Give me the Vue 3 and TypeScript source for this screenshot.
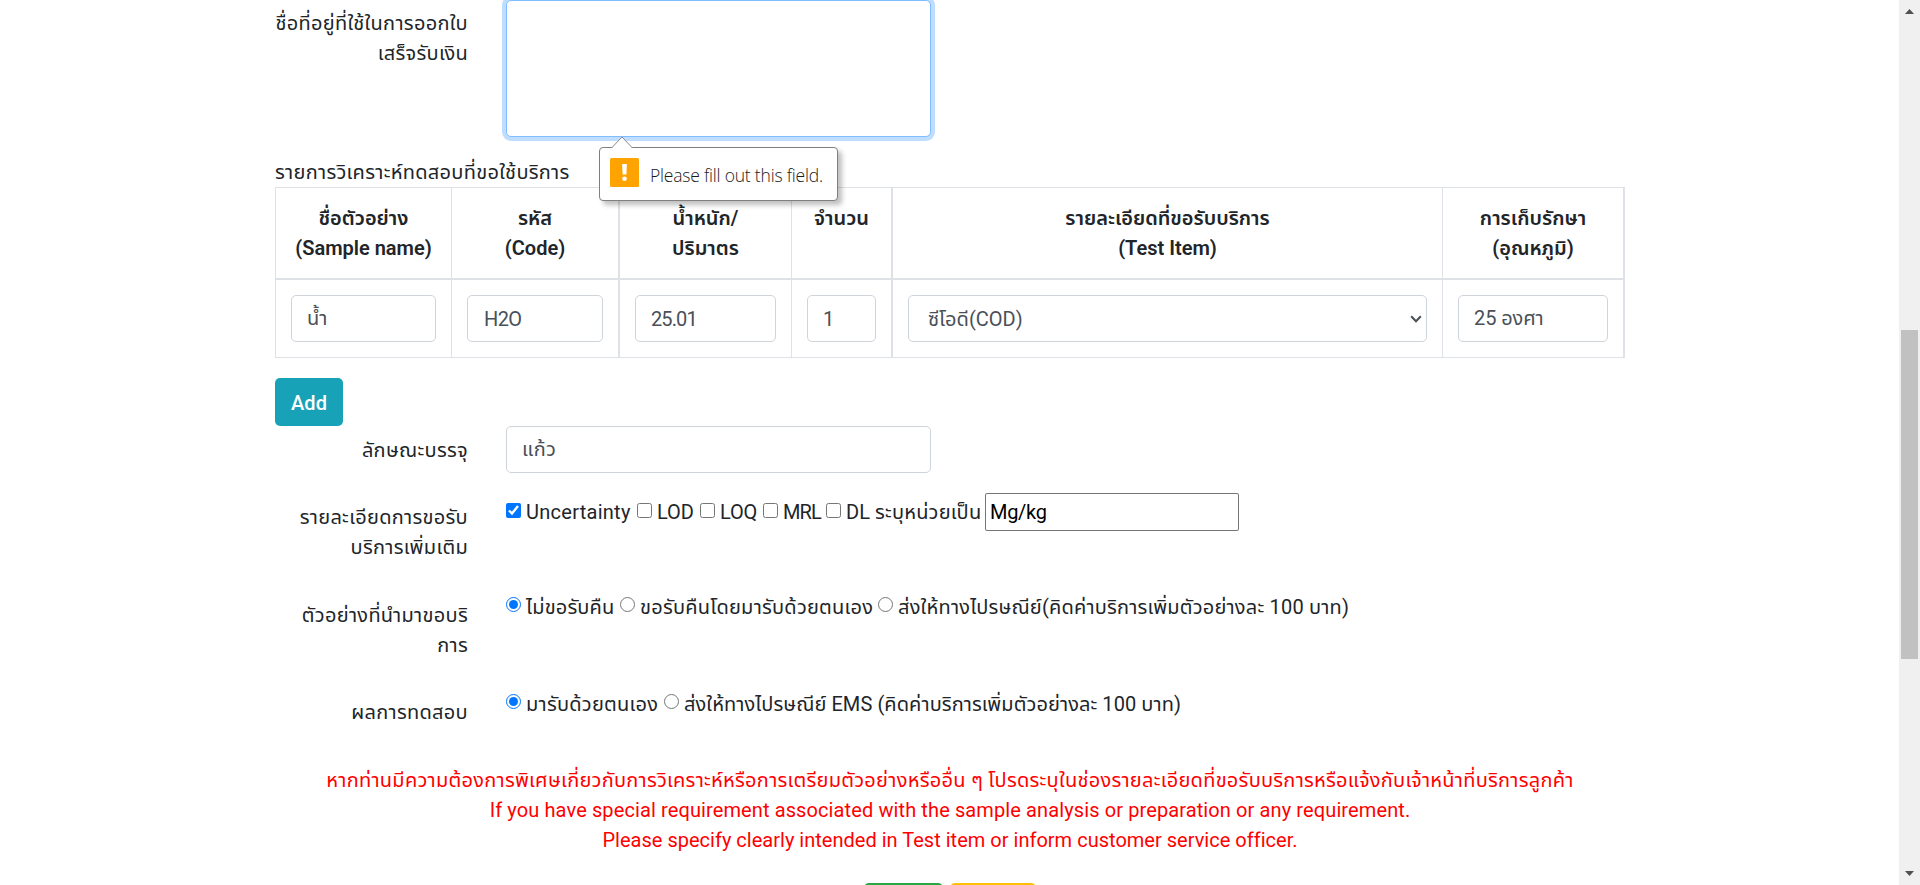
<script setup lang="ts">
import { ref } from 'vue'

interface Column { lines: string[]; width: number; thick?: boolean }
interface Option { label: string; width: number; spacing: number }

const columns: Column[] = [
  { lines: ['ชื่อตัวอย่าง', '(Sample name)'], width: 176 },
  { lines: ['รหัส', '(Code)'], width: 168, thick: true },
  { lines: ['น้ำหนัก/', 'ปริมาตร'], width: 172 },
  { lines: ['จำนวน'], width: 101, thick: true },
  { lines: ['รายละเอียดที่ขอรับบริการ', '(Test Item)'], width: 550 },
  { lines: ['การเก็บรักษา', '(อุณหภูมิ)'], width: 182, thick: true },
]
const extras: Option[] = [
  { label: 'Uncertainty', width: 131, spacing: 0.27 },
  { label: 'LOD', width: 63, spacing: -0.1 },
  { label: 'LOQ', width: 63, spacing: -0.2 },
  { label: 'MRL', width: 63, spacing: -0.9 },
  { label: 'DL', width: 49, spacing: 0 },
]
const returns: Option[] = [
  { label: 'ไม่ขอรับคืน', width: 114, spacing: 0.15 },
  { label: 'ขอรับคืนโดยมารับด้วยตนเอง', width: 258, spacing: 0.24 },
  { label: 'ส่งให้ทางไปรษณีย์(คิดค่าบริการเพิ่มตัวอย่างละ 100 บาท)', width: 480, spacing: 0.2 },
]
const results: Option[] = [
  { label: 'มารับด้วยตนเอง', width: 158, spacing: 0.25 },
  { label: 'ส่งให้ทางไปรษณีย์ EMS (คิดค่าบริการเพิ่มตัวอย่างละ 100 บาท)', width: 530, spacing: 0.08 },
]

const address = ref('')
const sample = ref({ name: 'น้ำ', code: 'H2O', weight: '25.01', amount: '1', item: 'ซีโอดี(COD)', storage: '25 องศา' })
const container = ref('แก้ว')
const checked = ref<string[]>(['Uncertainty'])
const unit = ref('Mg/kg')
const returnChoice = ref(returns[0].label)
const resultChoice = ref(results[0].label)
</script>

<template>
  <div class="page">
    <main class="content">
      <div class="row row-address">
        <label class="label">ชื่อที่อยู่ที่ใช้ในการออกใบ<br />เสร็จรับเงิน</label>
        <div class="address-field">
          <textarea v-model="address" class="control area"></textarea>
          <div class="bubble">
            <svg class="tip" width="22" height="12" viewBox="0 0 22 12">
              <path d="M0.5 12 L11 1 L21.5 12" fill="#fff" stroke="#8a8a8a" stroke-width="1" />
            </svg>
            <svg class="warn" width="29" height="29" viewBox="0 0 29 29">
              <rect width="29" height="29" rx="1.5" fill="#ffa300" />
              <path d="M12.1 6h4.8l-.5 10.5h-3.8z" fill="#fff" />
              <circle cx="14.5" cy="20.7" r="2.3" fill="#fff" />
            </svg>
            <span class="bubble-text">Please fill out this field.</span>
          </div>
        </div>
      </div>

      <div class="heading">รายการวิเคราะห์ทดสอบที่ขอใช้บริการ</div>

      <div class="table">
        <div class="tr head">
          <div v-for="(c, i) in columns" :key="i" class="cell" :class="{ thick: c.thick }" :style="{ width: c.width + 'px' }">
            <div v-for="l in c.lines" :key="l">{{ l }}</div>
          </div>
        </div>
        <div class="tr">
          <div class="cell" :style="{ width: columns[0].width + 'px' }"><input v-model="sample.name" class="control" /></div>
          <div class="cell thick" :style="{ width: columns[1].width + 'px' }"><input v-model="sample.code" class="control code" /></div>
          <div class="cell" :style="{ width: columns[2].width + 'px' }"><input v-model="sample.weight" class="control digits" /></div>
          <div class="cell thick" :style="{ width: columns[3].width + 'px' }"><input v-model="sample.amount" class="control digits" /></div>
          <div class="cell select-cell" :style="{ width: columns[4].width + 'px' }">
            <select v-model="sample.item" class="control select"><option>ซีโอดี(COD)</option></select>
            <svg class="chevron" width="12" height="8" viewBox="0 0 12 8">
              <path d="M1.2 1.2 L6 6.2 L10.8 1.2" fill="none" stroke="#495057" stroke-width="2" />
            </svg>
          </div>
          <div class="cell thick" :style="{ width: columns[5].width + 'px' }"><input v-model="sample.storage" class="control storage" /></div>
        </div>
      </div>

      <button class="add">Add</button>

      <div class="row row-container">
        <label class="label">ลักษณะบรรจุ</label>
        <input v-model="container" class="control wide" />
      </div>

      <div class="row row-extra">
        <label class="label">รายละเอียดการขอรับ<br />บริการเพิ่มเติม</label>
        <div class="options extra">
          <label v-for="o in extras" :key="o.label" class="option" :style="{ width: o.width + 'px', letterSpacing: o.spacing + 'px' }">
            <input v-model="checked" type="checkbox" :value="o.label" /><span>{{ o.label }}</span>
          </label>
          <span class="unit-label">ระบุหน่วยเป็น</span>
          <input v-model="unit" class="unit" />
        </div>
      </div>

      <div class="row row-return">
        <label class="label">ตัวอย่างที่นำมาขอบริ<br />การ</label>
        <div class="options">
          <label v-for="o in returns" :key="o.label" class="option" :style="{ width: o.width + 'px', letterSpacing: o.spacing + 'px' }">
            <input v-model="returnChoice" type="radio" name="return" :value="o.label" /><span>{{ o.label }}</span>
          </label>
        </div>
      </div>

      <div class="row row-result">
        <label class="label">ผลการทดสอบ</label>
        <div class="options">
          <label v-for="o in results" :key="o.label" class="option" :style="{ width: o.width + 'px', letterSpacing: o.spacing + 'px' }">
            <input v-model="resultChoice" type="radio" name="result" :value="o.label" /><span>{{ o.label }}</span>
          </label>
        </div>
      </div>

      <div class="notice">
        <div>หากท่านมีความต้องการพิเศษเกี่ยวกับการวิเคราะห์หรือการเตรียมตัวอย่างหรืออื่น ๆ โปรดระบุในช่องรายละเอียดที่ขอรับบริการหรือแจ้งกับเจ้าหน้าที่บริการลูกค้า</div>
        <div class="english">If you have special requirement associated with the sample analysis or preparation or any requirement.</div>
        <div class="english tight">Please specify clearly intended in Test item or inform customer service officer.</div>
      </div>

      <div class="actions">
        <button class="action save"></button>
        <button class="action reset"></button>
      </div>
    </main>

    <aside class="scrollbar">
      <svg class="arrow" width="9" height="5" viewBox="0 0 9 5"><path d="M0 5 L4.5 0 L9 5z" fill="#505050" /></svg>
      <div class="thumb"></div>
      <svg class="arrow down" width="9" height="5" viewBox="0 0 9 5"><path d="M0 0 L4.5 5 L9 0z" fill="#505050" /></svg>
    </aside>
  </div>
</template>

<style>
body { margin: 0; overflow: hidden; background: #fff; }
</style>

<style scoped>
.page {
  display: flex;
  justify-content: space-between;
  width: 1920px;
  height: 885px;
  overflow: hidden;
  font-family: Roboto, "Noto Sans Thai", "Noto Sans", sans-serif;
  font-size: 20px;
  line-height: 30px;
  letter-spacing: 0.3px;
  color: #212529;
}
.page *, .page *::before { box-sizing: border-box; }
.content { width: 1350px; margin-left: 275px; }
.row { display: flex; align-items: flex-start; gap: 38px; }
.label { width: 193px; padding-top: 9px; text-align: right; white-space: nowrap; flex: none; }
.row-address { height: 157px; }
.row-address .label { padding-top: 8px; }
.address-field { position: relative; width: 425px; }
.control {
  display: block;
  width: 100%;
  height: 47px;
  margin: 0;
  padding: 7px 15px;
  border: 1px solid #ced4da;
  border-radius: 5px;
  background: #fff;
  color: #495057;
  font: inherit;
  letter-spacing: inherit;
  outline: none;
}
.control.code { padding-left: 16px; letter-spacing: -0.6px; }
.control.digits { letter-spacing: -0.9px; }
.control.storage { letter-spacing: -0.1px; }
.control.select { padding-left: 19px; letter-spacing: 0; appearance: none; }
.select-cell { position: relative; }
.chevron { position: absolute; right: 20px; top: 35px; }
.control.area {
  height: 137px;
  resize: none;
  border-color: #80bdff;
  box-shadow: 0 0 0 4px #bfdeff;
}
.control.wide { width: 425px; }
.bubble {
  position: absolute;
  z-index: 2;
  top: 147px;
  left: 93px;
  display: flex;
  align-items: center;
  width: 239px;
  height: 54px;
  padding: 0 10px;
  gap: 11px;
  border: 1px solid #808080;
  border-radius: 4px;
  background: #fff;
  box-shadow: 4px 4px 5px rgba(0, 0, 0, 0.25);
}
.tip { position: absolute; top: -12px; left: 11px; }
.warn { margin-top: -3px; flex: none; }
.bubble-text {
  padding-top: 2px;
  font-family: "Open Sans", "Noto Sans", sans-serif;
  font-size: 17.5px;
  font-weight: 350;
  letter-spacing: -0.2px;
  color: #1a1a1a;
  white-space: nowrap;
}
.heading { height: 30px; }
.table { height: 171px; border: 1px solid #dee2e6; border-right: 0; }
.tr { display: flex; }
.head { height: 92px; border-bottom: 2px solid #dee2e6; font-weight: 600; letter-spacing: 0; text-align: center; }
.cell { flex: none; padding: 15px; border-right: 1px solid #dee2e6; white-space: nowrap; }
.cell.thick { border-right-width: 2px; }
.tr:not(.head) .cell { height: 77px; }
.table { width: 1350px; }
.add {
  display: block;
  width: 68px;
  height: 48px;
  margin-top: 20px;
  padding: 1px 0 0;
  border: 0;
  border-radius: 5px;
  background: #17a2b8;
  color: #fff;
  font: inherit;
  font-weight: 500;
}
.row-container { height: 67px; }
.row-extra { height: 98px; }
.row-return { height: 97px; }
.row-result { height: 77px; }
.options { display: flex; align-items: flex-start; white-space: nowrap; }
.option { display: flex; flex: none; }
.option input { width: 15px; height: 15px; margin: 6px 5px 0 0; flex: none; }
.option span { padding-top: 1px; }
.extra .option { margin-top: 4px; }
.extra .option span { padding-top: 0; }
.unit-label { width: 110px; margin-top: 4px; letter-spacing: 0.2px; }
.unit {
  width: 254px;
  height: 38px;
  padding: 1px 4px;
  border: 1px solid #767676;
  border-radius: 2px;
  background: #fff;
  color: #000;
  font: inherit;
  letter-spacing: -0.3px;
  outline: none;
}
.notice { height: 118px; color: #f00; letter-spacing: 0.27px; text-align: center; white-space: nowrap; }
.english { letter-spacing: 0.11px; }
.english.tight { letter-spacing: 0.015px; }
.actions { display: flex; justify-content: center; gap: 7px; }
.action { height: 48px; padding: 0; border: 0; border-radius: 5px; }
.save { width: 79px; background: #28a745; }
.reset { width: 86px; background: #ffc107; }
.scrollbar { position: relative; width: 21px; height: 885px; background: #f0f0f0; }
.arrow { position: absolute; left: 6px; top: 9px; }
.arrow.down { top: 871px; }
.thumb { width: 17px; height: 329px; margin: 330px 2px 0; background: #c1c1c1; }
</style>
